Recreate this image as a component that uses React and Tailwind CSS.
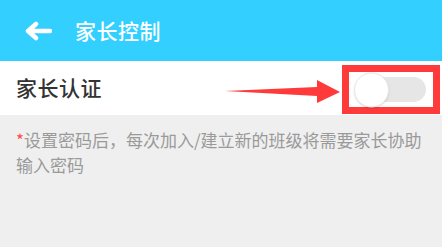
import React, { useState } from 'react';

export default function App() {
  const [on, setOn] = useState(false);

  return (
    <div
      className="relative h-[247px] w-[442px] overflow-hidden bg-[#efefef]"
      style={{ fontFamily: '"Noto Sans CJK SC", "Noto Sans", sans-serif' }}
    >
      {/* Header */}
      <div className="flex h-[61px] items-center bg-[#33cfff] text-white">
        <svg width="28" height="20" viewBox="0 0 28 20" className="ml-[24px]">
          <path d="M26 10H5M12 3L4 10l8 7" fill="none" stroke="white" strokeWidth="4.5" strokeLinecap="round" strokeLinejoin="round" />
        </svg>
        <h1 className="ml-[23px] text-[21px] font-medium tracking-[0.5px]">家长控制</h1>
      </div>

      {/* Row */}
      <div className="relative flex h-[54px] items-center justify-between bg-white pl-4 pr-[2px]">
        <span className="text-[21px] font-medium text-[#333333] tracking-[0.5px]">家长认证</span>
        <div className="mt-[3px] flex h-[49px] w-[98px] items-center border-[7px] border-[#ff3a3a] bg-white">
          <button
            onClick={() => setOn(!on)}
            className={`relative ml-[7px] h-[25px] w-[70px] rounded-full ${on ? 'bg-[#33cfff]' : 'bg-[#e6e6e6]'}`}
          >
            <span
              className={`absolute top-1/2 h-[35px] w-[35px] -translate-y-1/2 rounded-full border border-[#e8e8e8] bg-white shadow-[0_1px_2px_rgba(0,0,0,0.12)] ${on ? 'left-[36px]' : '-left-[2px]'}`}
            />
          </button>
        </div>

        {/* annotation arrow */}
        <svg width="118" height="26" viewBox="0 0 118 26" className="absolute left-[223px] top-[18px]">
          <path d="M2 12 L94 8 L94 1 L117 13 L94 24 L94 17 Z" fill="#ff3a3a" />
        </svg>
      </div>

      {/* Note */}
      <p className="px-4 pt-[12px] text-[17px] leading-[25px] text-[#9a9a9a]">
        <span className="text-[#ff4a4a]">*</span>设置密码后，每次加入/建立新的班级将需要家长协助输入密码
      </p>
    </div>
  );
}
